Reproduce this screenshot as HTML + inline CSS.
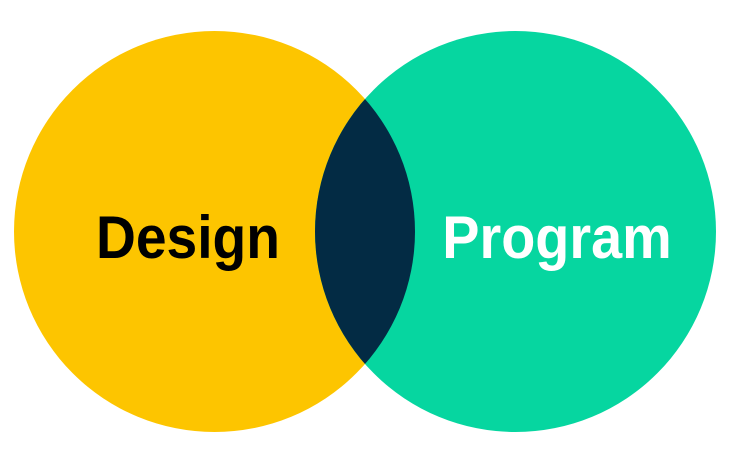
<!DOCTYPE html>
<html><head><style>
html,body{margin:0;padding:0;background:#fff;width:740px;height:463px;overflow:hidden}
svg{display:block}
</style></head><body>
<svg width="740" height="463" viewBox="0 0 740 463" xmlns="http://www.w3.org/2000/svg">
<defs><clipPath id="c"><circle cx="214.5" cy="231.5" r="200.5"/></clipPath></defs>
<circle cx="214.5" cy="231.5" r="200.5" fill="#FDC500"/>
<circle cx="515.5" cy="231.5" r="200.5" fill="#06D6A0"/>
<circle cx="515.5" cy="231.5" r="200.5" fill="#032B44" clip-path="url(#c)"/>
<text x="188" y="258" text-anchor="middle" font-family="Liberation Sans, sans-serif" font-weight="bold" font-size="60" fill="#000" transform="translate(188 0) scale(0.92 1) translate(-188 0)">Design</text>
<text x="557" y="258" text-anchor="middle" font-family="Liberation Sans, sans-serif" font-weight="bold" font-size="60" fill="#fff" transform="translate(557 0) scale(0.93 1) translate(-557 0)">Program</text>
</svg>
</body></html>
